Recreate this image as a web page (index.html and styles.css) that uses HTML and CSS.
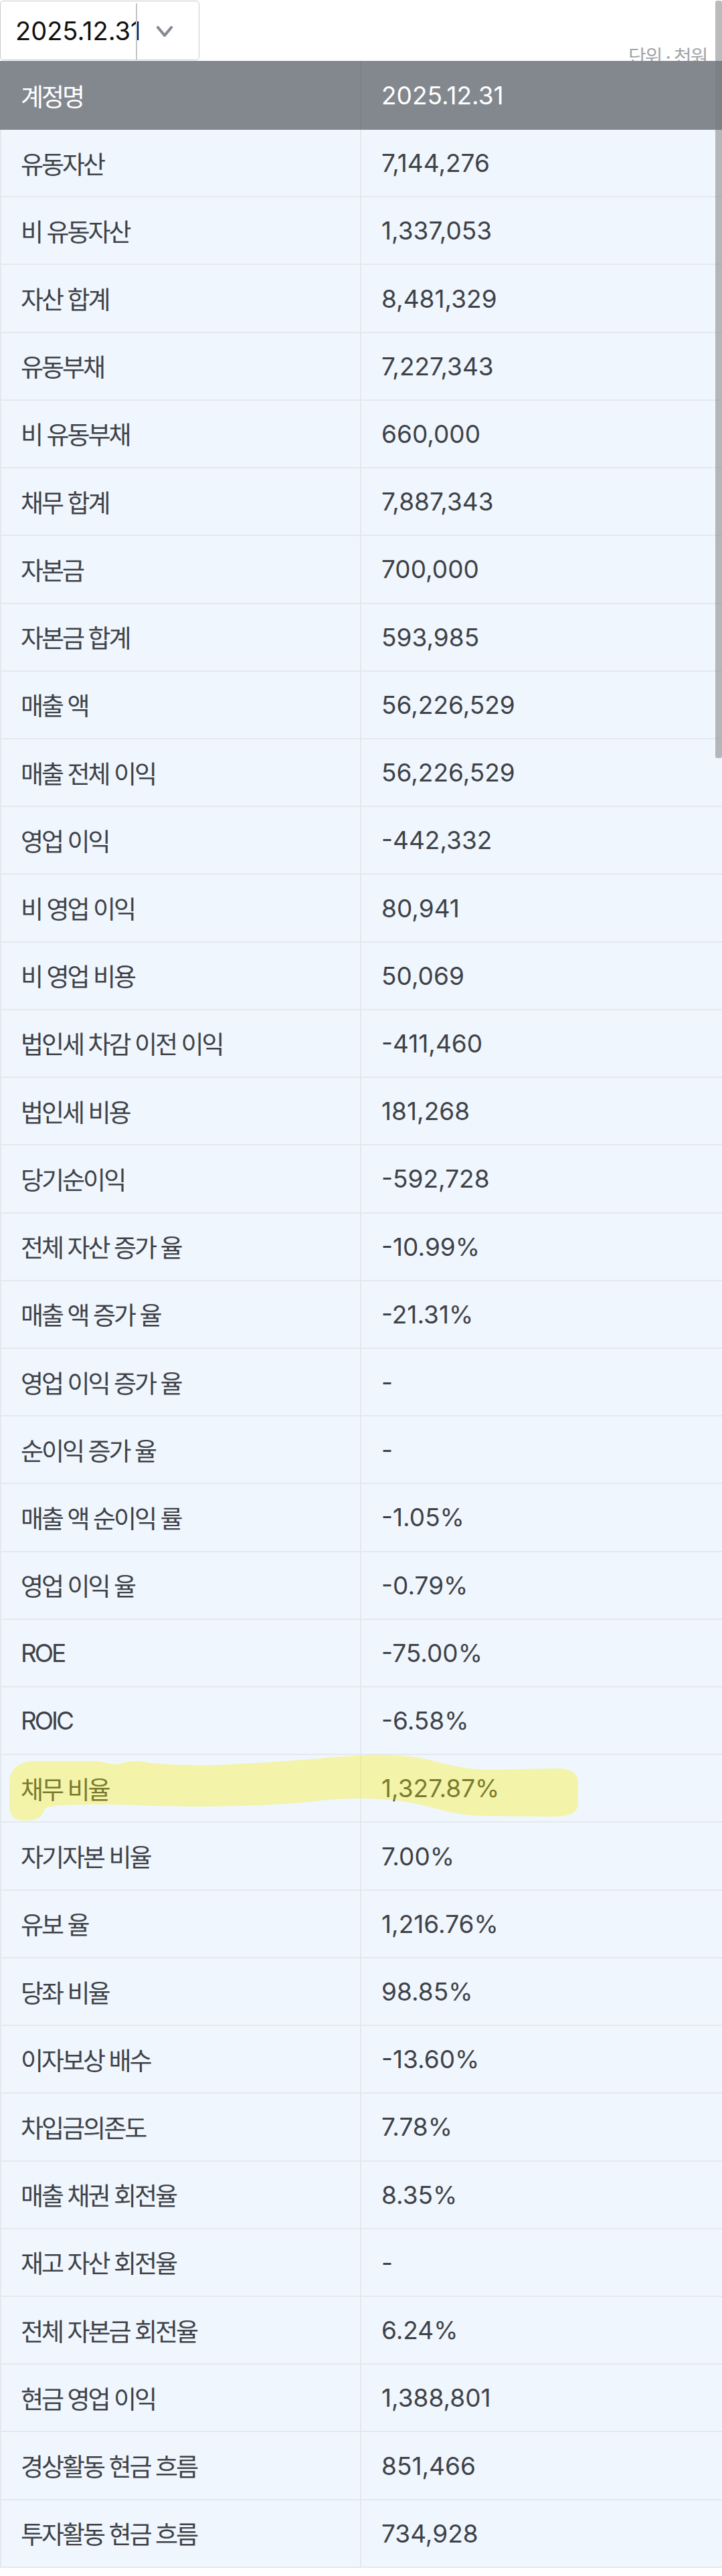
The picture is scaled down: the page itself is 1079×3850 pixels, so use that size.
FILE: index.html
```html
<!DOCTYPE html>
<html lang="ko">
<head>
<meta charset="utf-8">
<title>재무제표</title>
<link rel="stylesheet" href="styles.css">
</head>
<body>
<div class="page">
  <div class="toolbar">
    <div class="dropdown">
      <span class="dd-text">2025.12.31</span>
      <span class="dd-sep"></span>
      <span class="dd-arrow">
        <svg width="26" height="20" viewBox="0 0 26 20"><path d="M3 4 L13 16 L23 4" fill="none" stroke="#848a91" stroke-width="4.2" stroke-linecap="round" stroke-linejoin="round"/></svg>
      </span>
    </div>
    <span class="unit">단위 · 천원</span>
  </div>

  <div class="table">
    <div class="row head">
      <div class="cell label">계정명</div>
      <div class="cell value">2025.12.31</div>
    </div>
    <div class="row"><div class="cell label">유동자산</div><div class="cell value">7,144,276</div></div>
    <div class="row"><div class="cell label">비 유동자산</div><div class="cell value">1,337,053</div></div>
    <div class="row"><div class="cell label">자산 합계</div><div class="cell value">8,481,329</div></div>
    <div class="row"><div class="cell label">유동부채</div><div class="cell value">7,227,343</div></div>
    <div class="row"><div class="cell label">비 유동부채</div><div class="cell value">660,000</div></div>
    <div class="row"><div class="cell label">채무 합계</div><div class="cell value">7,887,343</div></div>
    <div class="row"><div class="cell label">자본금</div><div class="cell value">700,000</div></div>
    <div class="row"><div class="cell label">자본금 합계</div><div class="cell value">593,985</div></div>
    <div class="row"><div class="cell label">매출 액</div><div class="cell value">56,226,529</div></div>
    <div class="row"><div class="cell label">매출 전체 이익</div><div class="cell value">56,226,529</div></div>
    <div class="row"><div class="cell label">영업 이익</div><div class="cell value">-442,332</div></div>
    <div class="row"><div class="cell label">비 영업 이익</div><div class="cell value">80,941</div></div>
    <div class="row"><div class="cell label">비 영업 비용</div><div class="cell value">50,069</div></div>
    <div class="row"><div class="cell label">법인세 차감 이전 이익</div><div class="cell value">-411,460</div></div>
    <div class="row"><div class="cell label">법인세 비용</div><div class="cell value">181,268</div></div>
    <div class="row"><div class="cell label">당기순이익</div><div class="cell value">-592,728</div></div>
    <div class="row"><div class="cell label">전체 자산 증가 율</div><div class="cell value">-10.99%</div></div>
    <div class="row"><div class="cell label">매출 액 증가 율</div><div class="cell value">-21.31%</div></div>
    <div class="row"><div class="cell label">영업 이익 증가 율</div><div class="cell value">-</div></div>
    <div class="row"><div class="cell label">순이익 증가 율</div><div class="cell value">-</div></div>
    <div class="row"><div class="cell label">매출 액 순이익 률</div><div class="cell value">-1.05%</div></div>
    <div class="row"><div class="cell label">영업 이익 율</div><div class="cell value">-0.79%</div></div>
    <div class="row"><div class="cell label">ROE</div><div class="cell value">-75.00%</div></div>
    <div class="row"><div class="cell label">ROIC</div><div class="cell value">-6.58%</div></div>
    <div class="row"><div class="cell label">채무 비율</div><div class="cell value">1,327.87%</div></div>
    <div class="row"><div class="cell label">자기자본 비율</div><div class="cell value">7.00%</div></div>
    <div class="row"><div class="cell label">유보 율</div><div class="cell value">1,216.76%</div></div>
    <div class="row"><div class="cell label">당좌 비율</div><div class="cell value">98.85%</div></div>
    <div class="row"><div class="cell label">이자보상 배수</div><div class="cell value">-13.60%</div></div>
    <div class="row"><div class="cell label">차입금의존도</div><div class="cell value">7.78%</div></div>
    <div class="row"><div class="cell label">매출 채권 회전율</div><div class="cell value">8.35%</div></div>
    <div class="row"><div class="cell label">재고 자산 회전율</div><div class="cell value">-</div></div>
    <div class="row"><div class="cell label">전체 자본금 회전율</div><div class="cell value">6.24%</div></div>
    <div class="row"><div class="cell label">현금 영업 이익</div><div class="cell value">1,388,801</div></div>
    <div class="row"><div class="cell label">경상활동 현금 흐름</div><div class="cell value">851,466</div></div>
    <div class="row"><div class="cell label">투자활동 현금 흐름</div><div class="cell value">734,928</div></div>
  </div>

  <svg class="marker" width="880" height="120" viewBox="0 2610 880 120">
    <path d="M14 2665 C14 2642 30 2633 50 2632 L140 2632 C155 2632 165 2638 175 2637 C190 2632 205 2631 220 2634 C240 2637 280 2639 320 2638 C400 2635 480 2628 540 2623 C580 2621 615 2624 640 2630 C670 2638 700 2646 740 2645 L830 2643 C855 2643 864 2650 864 2665 L864 2695 C864 2710 850 2715 825 2715 L720 2714 C680 2712 660 2705 640 2700 C610 2692 575 2688 540 2688 C500 2688 470 2692 440 2695 C400 2698 340 2700 290 2700 C240 2700 200 2697 150 2697 C100 2697 68 2698 66 2705 C64 2715 55 2721 38 2721 C20 2721 14 2712 14 2700 Z" fill="rgba(250,240,0,0.33)"/>
  </svg>

  <div class="scroll-thumb"></div>
</div>
</body>
</html>
```

FILE: styles.css
```css
html, body {
  margin: 0;
  padding: 0;
  background: #ffffff;
  overflow: hidden;
}

body {
  font-family: "Inter", "Noto Sans CJK KR", sans-serif;
  color: #3e4248;
}

.page {
  position: relative;
  width: 1079px;
  min-height: 3850px;
}

.toolbar {
  display: flex;
  align-items: flex-start;
  height: 91px;
  white-space: nowrap;
}

.dropdown {
  display: flex;
  align-items: stretch;
  box-sizing: border-box;
  width: 298px;
  height: 89px;
  margin-top: 1px;
  border: 1px solid #c9cbce;
  border-radius: 5px;
  background: #ffffff;
}

.dd-text {
  display: flex;
  align-items: center;
  width: 180px;
  padding-left: 22px;
  font-size: 38px;
  color: #111111;
  overflow: visible;
}

.dd-sep {
  width: 2px;
  margin-top: 3px;
  background: #c3c6ca;
}

.dd-arrow {
  display: flex;
  align-items: center;
  padding-left: 28px;
  padding-top: 2px;
}

.unit {
  align-self: flex-end;
  margin-left: 641px;
  margin-bottom: -9px;
  font-size: 29px;
  line-height: 29px;
  letter-spacing: -2px;
  color: #a3a5a8;
}

.table {
  position: relative;
  width: 1079px;
}

.row {
  display: grid;
  grid-template-columns: 540px 1fr;
  box-sizing: border-box;
  height: 101.22px;
  background: #f0f6fd;
  border-bottom: 2px solid #e4e9ef;
}

.row.head {
  height: 103px;
  background: #83888f;
  border-bottom: 0;
  color: #ffffff;
}

.cell {
  display: flex;
  align-items: center;
  font-size: 37px;
  white-space: nowrap;
}

.cell.label {
  box-sizing: border-box;
  padding-left: 29px;
  letter-spacing: -3px;
  border-left: 2px solid #e4e9ef;
  border-right: 2px solid #e4e9ef;
}

.cell.value {
  padding-left: 30px;
}

.row.head .cell.label {
  border-left: 2px solid #83888f;
  border-right: 1px solid #777c83;
}

.marker {
  position: absolute;
  left: 0;
  top: 2610px;
  pointer-events: none;
}

.scroll-thumb {
  position: absolute;
  top: 1px;
  right: 0;
  width: 10px;
  height: 1132px;
  border-radius: 3px;
  background: rgba(118, 120, 124, 0.5);
}
```
